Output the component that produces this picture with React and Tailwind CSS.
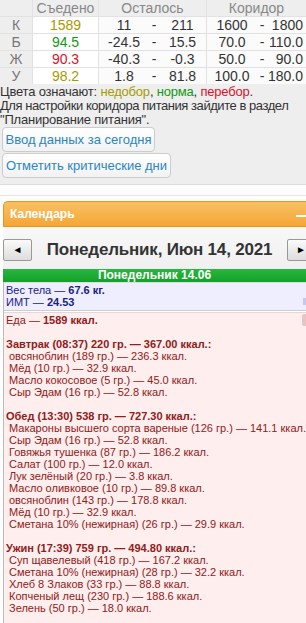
import React from "react";

const rows = [
  { l: "К", eaten: "1589", c: "text-[#a89a00]", r1: "11", r2: "211", k1: "1600", k2: "1800" },
  { l: "Б", eaten: "94.5", c: "text-[#119911]", r1: "-24.5", r2: "15.5", k1: "70.0", k2: "110.0" },
  { l: "Ж", eaten: "90.3", c: "text-[#e0102a]", r1: "-40.3", r2: "-0.3", k1: "50.0", k2: "90.0" },
  { l: "У", eaten: "98.2", c: "text-[#a89a00]", r1: "1.8", r2: "81.8", k1: "100.0", k2: "180.0" },
];

const meals = [
  {
    head: "Завтрак (08:37) 220 гр. — 367.00 ккал.:",
    items: [
      "овсяноблин (189 гр.) — 236.3 ккал.",
      "Мёд (10 гр.) — 32.9 ккал.",
      "Масло кокосовое (5 гр.) — 45.0 ккал.",
      "Сыр Эдам (16 гр.) — 52.8 ккал.",
    ],
  },
  {
    head: "Обед (13:30) 538 гр. — 727.30 ккал.:",
    items: [
      "Макароны высшего сорта вареные (126 гр.) — 141.1 ккал.",
      "Сыр Эдам (16 гр.) — 52.8 ккал.",
      "Говяжья тушенка (87 гр.) — 186.2 ккал.",
      "Салат (100 гр.) — 12.0 ккал.",
      "Лук зелёный (20 гр.) — 3.8 ккал.",
      "Масло оливковое (10 гр.) — 89.8 ккал.",
      "овсяноблин (143 гр.) — 178.8 ккал.",
      "Мёд (10 гр.) — 32.9 ккал.",
      "Сметана 10% (нежирная) (26 гр.) — 29.9 ккал.",
    ],
  },
  {
    head: "Ужин (17:39) 759 гр. — 494.80 ккал.:",
    items: [
      "Суп щавелевый (418 гр.) — 167.2 ккал.",
      "Сметана 10% (нежирная) (28 гр.) — 32.2 ккал.",
      "Хлеб 8 Злаков (33 гр.) — 88.8 ккал.",
      "Копченый лещ (230 гр.) — 188.6 ккал.",
      "Зелень (50 гр.) — 18.0 ккал.",
    ],
  },
];

function App() {
  return (
    <div className="w-[306px] h-[623px] overflow-hidden bg-white font-['Liberation_Sans',sans-serif]">
      {/* summary table */}
      <div className="bg-[#eeeeee] border-b border-[#dddddd] pb-[6px]">
        <div className="flex flex-col gap-px bg-[#e2e2e2] text-[14px] leading-[16px]">
          <div className="flex gap-px h-[16px] text-[#888888]">
            <div className="w-[32px] bg-[#eeeeee]" />
            <div className="w-[65px] bg-[#eeeeee] text-center">Съедено</div>
            <div className="w-[107px] bg-[#eeeeee] text-center">Осталось</div>
            <div className="flex-1 bg-[#eeeeee] text-center">Коридор</div>
          </div>
          {rows.map((r) => (
            <div key={r.l} className="flex gap-px h-[16px]">
              <div className="w-[32px] bg-[#eeeeee] text-[#777777] text-center">{r.l}</div>
              <div className={"w-[65px] bg-white text-center " + r.c}>{r.eaten}</div>
              <div className="w-[107px] bg-[#fbfbfb] flex text-[#333333]">
                <span className="w-[50px] text-center">{r.r1}</span>
                <span className="w-[10px] text-center">-</span>
                <span className="w-[47px] text-center">{r.r2}</span>
              </div>
              <div className="flex-1 bg-[#fbfbfb] flex text-[#333333]">
                <span className="w-[50px] text-center">{r.k1}</span>
                <span className="w-[10px] text-center">-</span>
                <span className="flex-1 text-right pr-[3px]">{r.k2}</span>
              </div>
            </div>
          ))}
        </div>
        <div className="text-[13px] leading-[14px] text-[#333333] mt-[1px] whitespace-nowrap tracking-[-0.2px]">
          <div>
            Цвета означают: <span className="text-[#a89a00]">недобор</span>,{" "}
            <span className="text-[#119911]">норма</span>,{" "}
            <span className="text-[#e0102a]">перебор</span>.
          </div>
          <div className="tracking-[-0.45px]">Для настройки коридора питания зайдите в раздел</div>
          <div>"Планирование питания".</div>
        </div>
        <div className="flex flex-col items-start gap-px pl-[2px]">
          <button className="h-[25px] w-[153px] rounded-[4px] border border-[#cccccc] bg-gradient-to-b from-white to-[#f2f2f2] text-[13px] text-[#2a86c2] text-center whitespace-nowrap">
            Ввод данных за сегодня
          </button>
          <button className="h-[25px] w-[169px] rounded-[4px] border border-[#cccccc] bg-gradient-to-b from-white to-[#f2f2f2] text-[13px] text-[#2a86c2] text-center whitespace-nowrap">
            Отметить критические дни
          </button>
        </div>
      </div>
      <div className="h-[11px] border-b border-[#e6e6e6] bg-[#fdfdfd]" />
      <div className="h-[5px]" />

      {/* calendar */}
      <div className="pl-[3px]">
        <div className="h-[26px] rounded-tl-[5px] border border-r-0 border-[#e8951e] bg-gradient-to-b from-[#f9c062] to-[#f5a634] flex items-center justify-between">
          <span className="pl-[6px] text-[12px] font-bold text-white">Календарь</span>
          <span className="w-[10px] h-[2px] bg-white mt-[3px]" />
        </div>
        <div className="bg-gradient-to-b from-[#f8f8f8] to-[#f0f0f0] h-[42px] flex items-center justify-between pt-[3px]">
          <button className="w-[29px] h-[22px] shrink-0 rounded-[2px] border border-[#999999] bg-gradient-to-b from-[#fafafa] to-[#dddddd] text-[10px] text-black flex items-center justify-center">
            ◄
          </button>
          <div className="text-[17px] font-bold text-[#333333] tracking-[-0.2px] whitespace-nowrap">Понедельник, Июн 14, 2021</div>
          <button className="w-[29px] h-[22px] shrink-0 -mr-[10px] rounded-[2px] border border-[#999999] bg-gradient-to-b from-[#fafafa] to-[#dddddd] text-[10px] text-black flex items-center justify-start pl-[8px]">
            ►
          </button>
        </div>
        <div className="h-[13px] bg-gradient-to-b from-[#27b83d] to-[#13a02b] text-white text-[12px] font-bold leading-[13px] text-center">
          Понедельник 14.06
        </div>
        <div className="border-l border-[#bbbbbb]">
          <div className="relative bg-[#eeeeff] border-t border-[#dddddd] border-b border-b-[#cccccc] h-[29px] pl-[2px] text-[11px] leading-[12px] text-[#1a237e] pt-[1px]">
            <div>Вес тела — <b>67.6 кг.</b></div>
            <div>ИМТ — <b>24.53</b></div>
            <span className="absolute right-0 top-[15px] w-[3px] h-[7px] bg-[#c8c8ee]" />
          </div>
          <div className="relative bg-[#ffeeee] border-t border-[#e2d8d8] mt-px pl-[2px] pt-[1px] text-[11px] leading-[12px] text-[#8f2020] h-[320px]">
            <span className="absolute right-0 top-[1px] w-[4px] h-[12px] rounded-l-[2px] bg-[#e8c4c4]" />
            <div>
              Еда — <b>1589 ккал.</b>
            </div>
            {meals.map((m) => (
              <div key={m.head} className="mt-[12px]">
                <div className="font-bold">{m.head}</div>
                {m.items.map((it, i) => (
                  <div key={i} className="pl-[3px]">{it}</div>
                ))}
              </div>
            ))}
          </div>
        </div>
      </div>
    </div>
  );
}

export default App;
